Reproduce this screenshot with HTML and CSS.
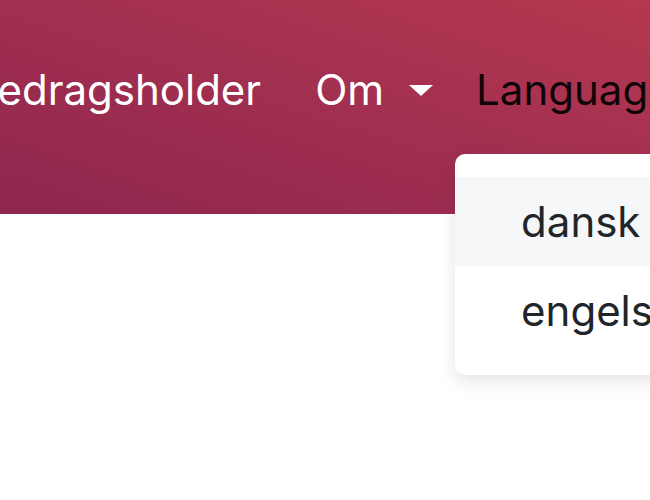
FILE: index.html
```html
<!DOCTYPE html>
<html lang="da">
<head>
    <meta charset="UTF-8">
    <meta name="viewport" content="width=device-width, initial-scale=1.0">
    <title>Foredrag</title>
    <link rel="stylesheet" href="styles.css">
</head>
<body>
    <div class="page">
        <nav class="navbar">
            <ul class="nav">
                <li class="nav-item first"><a class="nav-link" href="#">Foredragsholder</a></li>
                <li class="nav-item about"><a class="nav-link dropdown-toggle" href="#">Om<span class="caret"></span></a></li>
                <li class="nav-item lang">
                    <a class="nav-link active" href="#">Language</a>
                    <ul class="dropdown-menu">
                        <li><a class="dropdown-item hover" href="#">dansk</a></li>
                        <li><a class="dropdown-item" href="#">engelsk</a></li>
                    </ul>
                </li>
            </ul>
        </nav>
    </div>
</body>
</html>
```

FILE: styles.css
```css
body {
    margin: 0;
    font-family: 'Inter', 'Liberation Sans', sans-serif;
    background: #fff;
}
.page {
    width: 650px;
    height: 500px;
    overflow: hidden;
}
.navbar {
    height: 214px;
    box-sizing: border-box;
    padding-top: 58px;
    background: linear-gradient(to top right, #8e2650, #b4384f);
}
.nav {
    display: flex;
    list-style: none;
    margin: 0;
    padding: 0;
    white-space: nowrap;
}
.nav-item.first {
    margin-left: -86px;
    margin-right: 14px;
}
.nav-item.about {
    margin-right: 3px;
}
.nav-link {
    display: block;
    padding: 0 20px;
    font-size: 42px;
    line-height: 63px;
    color: #fff;
    text-decoration: none;
}
.nav-link.active {
    color: rgba(0, 0, 0, 0.92);
}
.caret {
    display: inline-block;
    margin-left: 25px;
    vertical-align: 9px;
    border-top: 11px solid #fff;
    border-left: 12.5px solid transparent;
    border-right: 12.5px solid transparent;
}
.lang {
    position: relative;
}
.dropdown-menu {
    position: absolute;
    top: 96px;
    left: -1px;
    width: 320px;
    margin: 0;
    padding: 23px 0 20px;
    list-style: none;
    background: #fff;
    border-radius: 10px;
    box-shadow: 0 6px 18px rgba(0, 0, 0, 0.11);
}
.dropdown-item {
    display: block;
    padding: 13px 66px;
    font-size: 42px;
    line-height: 63px;
    color: #212529;
    text-decoration: none;
}
.dropdown-item.hover {
    background: #f6f7f9;
}
```
